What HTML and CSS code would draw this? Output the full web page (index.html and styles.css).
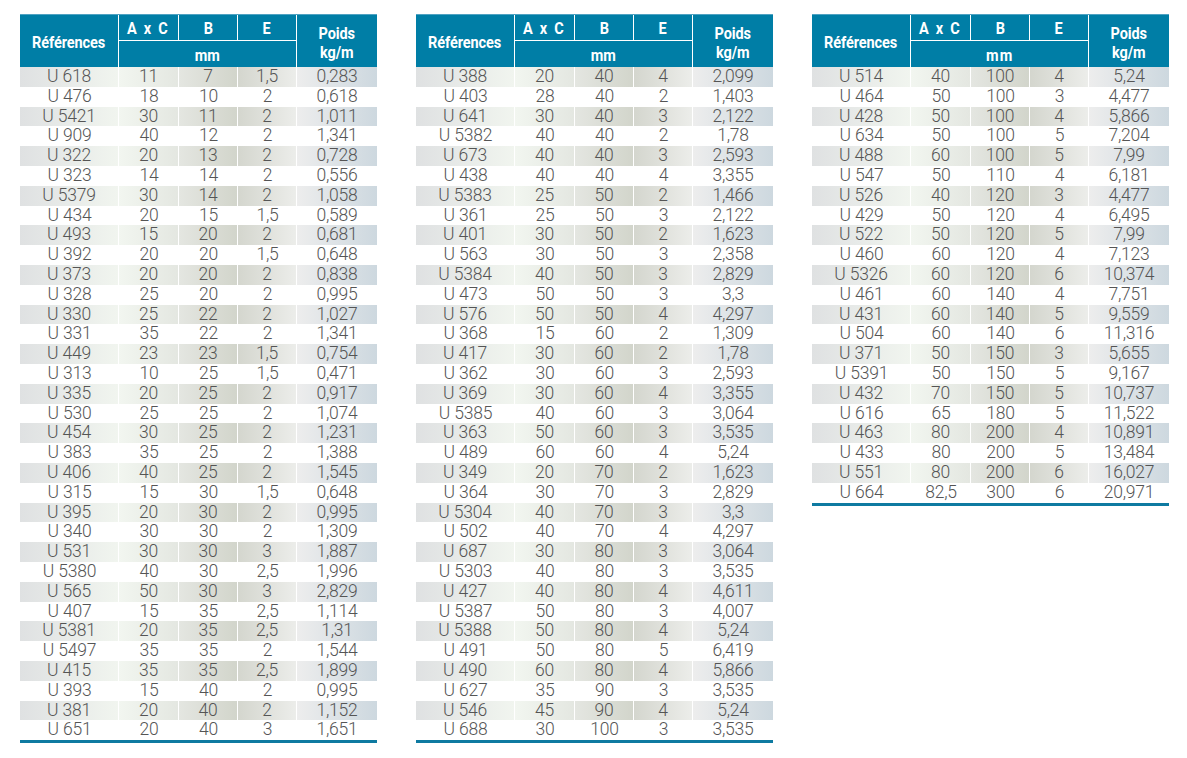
FILE: index.html
```html
<!DOCTYPE html>
<html lang="fr">
<head>
<meta charset="utf-8">
<title>Profilés U</title>
<link rel="stylesheet" href="styles.css">
</head>
<body>
<div class="page">

<div class="tbl">
  <div class="head">
    <div class="h ref"><span class="t">Références</span></div>
    <div class="h axc"><span class="t">A x C</span></div>
    <div class="h b"><span class="t">B</span></div>
    <div class="h e"><span class="t">E</span></div>
    <div class="h mm"><span class="t">mm</span></div>
    <div class="h poids"><span class="t">Poids<br>kg/m</span></div>
  </div>
  <div class="rows">
    <div class="row"><span>U 618</span><span>11</span><span>7</span><span>1,5</span><span>0,283</span></div>
    <div class="row"><span>U 476</span><span>18</span><span>10</span><span>2</span><span>0,618</span></div>
    <div class="row"><span>U 5421</span><span>30</span><span>11</span><span>2</span><span>1,011</span></div>
    <div class="row"><span>U 909</span><span>40</span><span>12</span><span>2</span><span>1,341</span></div>
    <div class="row"><span>U 322</span><span>20</span><span>13</span><span>2</span><span>0,728</span></div>
    <div class="row"><span>U 323</span><span>14</span><span>14</span><span>2</span><span>0,556</span></div>
    <div class="row"><span>U 5379</span><span>30</span><span>14</span><span>2</span><span>1,058</span></div>
    <div class="row"><span>U 434</span><span>20</span><span>15</span><span>1,5</span><span>0,589</span></div>
    <div class="row"><span>U 493</span><span>15</span><span>20</span><span>2</span><span>0,681</span></div>
    <div class="row"><span>U 392</span><span>20</span><span>20</span><span>1,5</span><span>0,648</span></div>
    <div class="row"><span>U 373</span><span>20</span><span>20</span><span>2</span><span>0,838</span></div>
    <div class="row"><span>U 328</span><span>25</span><span>20</span><span>2</span><span>0,995</span></div>
    <div class="row"><span>U 330</span><span>25</span><span>22</span><span>2</span><span>1,027</span></div>
    <div class="row"><span>U 331</span><span>35</span><span>22</span><span>2</span><span>1,341</span></div>
    <div class="row"><span>U 449</span><span>23</span><span>23</span><span>1,5</span><span>0,754</span></div>
    <div class="row"><span>U 313</span><span>10</span><span>25</span><span>1,5</span><span>0,471</span></div>
    <div class="row"><span>U 335</span><span>20</span><span>25</span><span>2</span><span>0,917</span></div>
    <div class="row"><span>U 530</span><span>25</span><span>25</span><span>2</span><span>1,074</span></div>
    <div class="row"><span>U 454</span><span>30</span><span>25</span><span>2</span><span>1,231</span></div>
    <div class="row"><span>U 383</span><span>35</span><span>25</span><span>2</span><span>1,388</span></div>
    <div class="row"><span>U 406</span><span>40</span><span>25</span><span>2</span><span>1,545</span></div>
    <div class="row"><span>U 315</span><span>15</span><span>30</span><span>1,5</span><span>0,648</span></div>
    <div class="row"><span>U 395</span><span>20</span><span>30</span><span>2</span><span>0,995</span></div>
    <div class="row"><span>U 340</span><span>30</span><span>30</span><span>2</span><span>1,309</span></div>
    <div class="row"><span>U 531</span><span>30</span><span>30</span><span>3</span><span>1,887</span></div>
    <div class="row"><span>U 5380</span><span>40</span><span>30</span><span>2,5</span><span>1,996</span></div>
    <div class="row"><span>U 565</span><span>50</span><span>30</span><span>3</span><span>2,829</span></div>
    <div class="row"><span>U 407</span><span>15</span><span>35</span><span>2,5</span><span>1,114</span></div>
    <div class="row"><span>U 5381</span><span>20</span><span>35</span><span>2,5</span><span>1,31</span></div>
    <div class="row"><span>U 5497</span><span>35</span><span>35</span><span>2</span><span>1,544</span></div>
    <div class="row"><span>U 415</span><span>35</span><span>35</span><span>2,5</span><span>1,899</span></div>
    <div class="row"><span>U 393</span><span>15</span><span>40</span><span>2</span><span>0,995</span></div>
    <div class="row"><span>U 381</span><span>20</span><span>40</span><span>2</span><span>1,152</span></div>
    <div class="row"><span>U 651</span><span>20</span><span>40</span><span>3</span><span>1,651</span></div>
  </div>
</div>

<div class="tbl">
  <div class="head">
    <div class="h ref"><span class="t">Références</span></div>
    <div class="h axc"><span class="t">A x C</span></div>
    <div class="h b"><span class="t">B</span></div>
    <div class="h e"><span class="t">E</span></div>
    <div class="h mm"><span class="t">mm</span></div>
    <div class="h poids"><span class="t">Poids<br>kg/m</span></div>
  </div>
  <div class="rows">
    <div class="row"><span>U 388</span><span>20</span><span>40</span><span>4</span><span>2,099</span></div>
    <div class="row"><span>U 403</span><span>28</span><span>40</span><span>2</span><span>1,403</span></div>
    <div class="row"><span>U 641</span><span>30</span><span>40</span><span>3</span><span>2,122</span></div>
    <div class="row"><span>U 5382</span><span>40</span><span>40</span><span>2</span><span>1,78</span></div>
    <div class="row"><span>U 673</span><span>40</span><span>40</span><span>3</span><span>2,593</span></div>
    <div class="row"><span>U 438</span><span>40</span><span>40</span><span>4</span><span>3,355</span></div>
    <div class="row"><span>U 5383</span><span>25</span><span>50</span><span>2</span><span>1,466</span></div>
    <div class="row"><span>U 361</span><span>25</span><span>50</span><span>3</span><span>2,122</span></div>
    <div class="row"><span>U 401</span><span>30</span><span>50</span><span>2</span><span>1,623</span></div>
    <div class="row"><span>U 563</span><span>30</span><span>50</span><span>3</span><span>2,358</span></div>
    <div class="row"><span>U 5384</span><span>40</span><span>50</span><span>3</span><span>2,829</span></div>
    <div class="row"><span>U 473</span><span>50</span><span>50</span><span>3</span><span>3,3</span></div>
    <div class="row"><span>U 576</span><span>50</span><span>50</span><span>4</span><span>4,297</span></div>
    <div class="row"><span>U 368</span><span>15</span><span>60</span><span>2</span><span>1,309</span></div>
    <div class="row"><span>U 417</span><span>30</span><span>60</span><span>2</span><span>1,78</span></div>
    <div class="row"><span>U 362</span><span>30</span><span>60</span><span>3</span><span>2,593</span></div>
    <div class="row"><span>U 369</span><span>30</span><span>60</span><span>4</span><span>3,355</span></div>
    <div class="row"><span>U 5385</span><span>40</span><span>60</span><span>3</span><span>3,064</span></div>
    <div class="row"><span>U 363</span><span>50</span><span>60</span><span>3</span><span>3,535</span></div>
    <div class="row"><span>U 489</span><span>60</span><span>60</span><span>4</span><span>5,24</span></div>
    <div class="row"><span>U 349</span><span>20</span><span>70</span><span>2</span><span>1,623</span></div>
    <div class="row"><span>U 364</span><span>30</span><span>70</span><span>3</span><span>2,829</span></div>
    <div class="row"><span>U 5304</span><span>40</span><span>70</span><span>3</span><span>3,3</span></div>
    <div class="row"><span>U 502</span><span>40</span><span>70</span><span>4</span><span>4,297</span></div>
    <div class="row"><span>U 687</span><span>30</span><span>80</span><span>3</span><span>3,064</span></div>
    <div class="row"><span>U 5303</span><span>40</span><span>80</span><span>3</span><span>3,535</span></div>
    <div class="row"><span>U 427</span><span>40</span><span>80</span><span>4</span><span>4,611</span></div>
    <div class="row"><span>U 5387</span><span>50</span><span>80</span><span>3</span><span>4,007</span></div>
    <div class="row"><span>U 5388</span><span>50</span><span>80</span><span>4</span><span>5,24</span></div>
    <div class="row"><span>U 491</span><span>50</span><span>80</span><span>5</span><span>6,419</span></div>
    <div class="row"><span>U 490</span><span>60</span><span>80</span><span>4</span><span>5,866</span></div>
    <div class="row"><span>U 627</span><span>35</span><span>90</span><span>3</span><span>3,535</span></div>
    <div class="row"><span>U 546</span><span>45</span><span>90</span><span>4</span><span>5,24</span></div>
    <div class="row"><span>U 688</span><span>30</span><span>100</span><span>3</span><span>3,535</span></div>
  </div>
</div>

<div class="tbl">
  <div class="head">
    <div class="h ref"><span class="t">Références</span></div>
    <div class="h axc"><span class="t">A x C</span></div>
    <div class="h b"><span class="t">B</span></div>
    <div class="h e"><span class="t">E</span></div>
    <div class="h mm wide"><span class="t">mm</span></div>
    <div class="h poids"><span class="t">Poids<br>kg/m</span></div>
  </div>
  <div class="rows">
    <div class="row"><span>U 514</span><span>40</span><span>100</span><span>4</span><span>5,24</span></div>
    <div class="row"><span>U 464</span><span>50</span><span>100</span><span>3</span><span>4,477</span></div>
    <div class="row"><span>U 428</span><span>50</span><span>100</span><span>4</span><span>5,866</span></div>
    <div class="row"><span>U 634</span><span>50</span><span>100</span><span>5</span><span>7,204</span></div>
    <div class="row"><span>U 488</span><span>60</span><span>100</span><span>5</span><span>7,99</span></div>
    <div class="row"><span>U 547</span><span>50</span><span>110</span><span>4</span><span>6,181</span></div>
    <div class="row"><span>U 526</span><span>40</span><span>120</span><span>3</span><span>4,477</span></div>
    <div class="row"><span>U 429</span><span>50</span><span>120</span><span>4</span><span>6,495</span></div>
    <div class="row"><span>U 522</span><span>50</span><span>120</span><span>5</span><span>7,99</span></div>
    <div class="row"><span>U 460</span><span>60</span><span>120</span><span>4</span><span>7,123</span></div>
    <div class="row"><span>U 5326</span><span>60</span><span>120</span><span>6</span><span>10,374</span></div>
    <div class="row"><span>U 461</span><span>60</span><span>140</span><span>4</span><span>7,751</span></div>
    <div class="row"><span>U 431</span><span>60</span><span>140</span><span>5</span><span>9,559</span></div>
    <div class="row"><span>U 504</span><span>60</span><span>140</span><span>6</span><span>11,316</span></div>
    <div class="row"><span>U 371</span><span>50</span><span>150</span><span>3</span><span>5,655</span></div>
    <div class="row"><span>U 5391</span><span>50</span><span>150</span><span>5</span><span>9,167</span></div>
    <div class="row"><span>U 432</span><span>70</span><span>150</span><span>5</span><span>10,737</span></div>
    <div class="row"><span>U 616</span><span>65</span><span>180</span><span>5</span><span>11,522</span></div>
    <div class="row"><span>U 463</span><span>80</span><span>200</span><span>4</span><span>10,891</span></div>
    <div class="row"><span>U 433</span><span>80</span><span>200</span><span>5</span><span>13,484</span></div>
    <div class="row"><span>U 551</span><span>80</span><span>200</span><span>6</span><span>16,027</span></div>
    <div class="row"><span>U 664</span><span>82,5</span><span>300</span><span>6</span><span>20,971</span></div>
  </div>
</div>

</div>
</body>
</html>
```
FILE: styles.css
```css
html, body {
  margin: 0;
  padding: 0;
  background: #ffffff;
}

.page {
  display: flex;
  align-items: flex-start;
  gap: 39px;
  padding: 14px 0 0 20px;
}

.tbl {
  width: 357px;
  border-bottom: 3px solid #0e7aa1;
}

.head {
  display: grid;
  grid-template-columns: 99px 60px 59px 59px 80px;
  grid-template-rows: 26px 27px;
  background: #007ea6;
  border-top: 1px solid #4fa2c2;
  box-sizing: border-box;
  height: 53px;
  font-family: Roboto, "Liberation Sans", sans-serif;
  font-weight: 700;
  font-size: 16.5px;
  color: #ffffff;
}

.h {
  display: flex;
  align-items: center;
  justify-content: center;
  text-align: center;
  box-sizing: border-box;
}

.t {
  display: inline-block;
  transform: scaleX(0.88);
  letter-spacing: -0.1px;
}

.ref {
  grid-column: 1;
  grid-row: 1 / 3;
  border-right: 1px solid #ffffff;
  padding-top: 2px;
}

.axc, .b, .e {
  grid-row: 1;
  border-right: 1px solid #ffffff;
  border-bottom: 1px solid #ffffff;
  padding-top: 1px;
}

.axc .t {
  letter-spacing: 2px;
}

.b { grid-column: 3; }
.e { grid-column: 4; }
.axc { grid-column: 2; }

.mm {
  grid-column: 2 / 5;
  grid-row: 2;
  border-right: 1px solid #ffffff;
  padding-top: 2px;
}

.mm.wide .t {
  letter-spacing: 1.5px;
}

.poids {
  grid-column: 5;
  grid-row: 1 / 3;
  line-height: 19px;
  padding-top: 2px;
}

.rows {
  display: grid;
  grid-auto-rows: 19.8px;
}

.row {
  display: grid;
  grid-template-columns: 99px 60px 59px 59px 80px;
  font-family: Roboto, "Liberation Sans", sans-serif;
  font-weight: 300;
  font-size: 17.5px;
  letter-spacing: -0.2px;
  line-height: 19.8px;
  color: #555555;
}

.row span {
  display: block;
  text-align: center;
  box-sizing: border-box;
  white-space: nowrap;
}

.row:nth-child(odd) span {
  border-right: 1px solid #ffffff;
}

.row:nth-child(odd) span:last-child {
  border-right: 0;
}

.row:nth-child(odd) span:nth-child(1) {
  background: linear-gradient(90deg, #dfe1e2, #f1f5ef);
}

.row:nth-child(odd) span:nth-child(2) {
  background: linear-gradient(90deg, #f2f6f0, #e4e7e1);
}

.row:nth-child(odd) span:nth-child(3) {
  background: linear-gradient(90deg, #e4e6e1, #d2d5cb);
}

.row:nth-child(odd) span:nth-child(4) {
  background: linear-gradient(90deg, #d4d6ce, #ecedea);
}

.row:nth-child(odd) span:nth-child(5) {
  background: linear-gradient(90deg, #ededed, #cdd8df);
}
```
